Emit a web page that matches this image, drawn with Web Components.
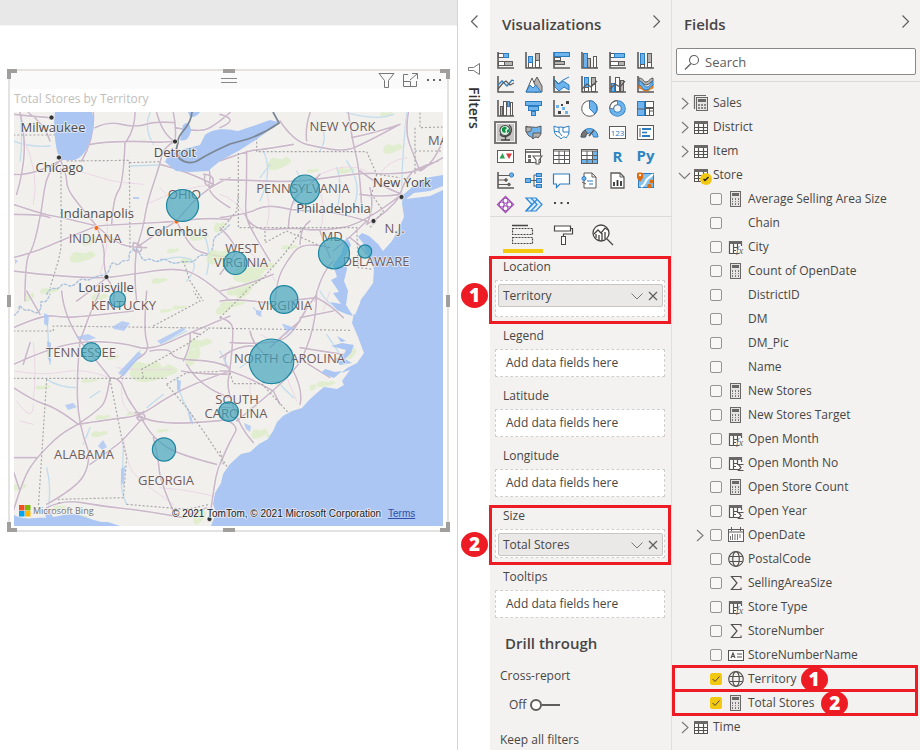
<!DOCTYPE html>
<html lang="en">
<head>
<meta charset="utf-8">
<meta name="viewport" content="width=device-width, initial-scale=1">
<title>Total Stores by Territory</title>
<style>
  html { height: 100%; }
  body {
    margin: 0; min-height: 100%; background: #fff; color: #484644;
    font: 12px/24px "Open Sans", "Noto Sans", sans-serif;
    --pane: #f3f2f1; --line: #e1dfdd; --ink: #605e5c; --red: #ed1c24; --yellow: #f2c811;
  }
</style>
</head>
<body>
<report-app></report-app>

<script>
class Base extends HTMLElement {
  connectedCallback() {
    if (this.shadowRoot) return;
    const t = document.createElement('template');
    t.innerHTML = '<style>*,*::before,*::after{box-sizing:border-box}button{font:inherit;color:inherit;background:none;border:0;padding:0;cursor:pointer}svg{display:block}' +
      this.css() + '</style>' + this.html();
    this.attachShadow({ mode: 'open' }).append(t.content.cloneNode(true));
  }
  css() { return ''; }
  html() { return ''; }
}

/* ---------- icons ---------- */
const K = '#5d5b59', B = '#6fb3ec', D = '#2b7cc0', G = '#b5b3b1', W = '#fff';
const r = (x, y, w, h, f = W, s = K) => `<rect x="${x + .5}" y="${y + .5}" width="${w - 1}" height="${h - 1}" fill="${f}" stroke="${s}"/>`;
const p = (d, f = 'none', s = K, w = 1) => `<path d="${d}" fill="${f}" stroke="${s}" stroke-width="${w}"/>`;
const c = (x, y, q, f = 'none', s = K, w = 1) => `<circle cx="${x}" cy="${y}" r="${q}" fill="${f}" stroke="${s}" stroke-width="${w}"/>`;
const axis = p('M1 0V16H17', 'none', K, 1.6);
const usa = 'M1 2C4 4 6 3 8 3C11 4 13 3 16 2V8C16 11 14 12 13 14C11 12 10 13 8 15C7 12 4 13 3 11C1 9 1 5 1 2Z';
const vizIcons = [
  ['Stacked bar chart', axis + r(1, 1, 6, 5) + r(6, 1, 6, 5, B, D) + r(1, 9, 7, 5) + r(7, 9, 9, 5, G)],
  ['Stacked column chart', axis + r(3, 10, 5, 6) + r(3, 4, 5, 7, B, D) + r(10, 8, 5, 8) + r(10, 1, 5, 8, G)],
  ['Clustered bar chart', axis + r(1, 0, 16, 5, B, D) + r(1, 5, 7, 4) + r(1, 9, 11, 4, G)],
  ['Clustered column chart', axis + r(2, 1, 5, 15, B, D) + r(6, 6, 4, 10, G) + r(12, 4, 4, 12)],
  ['100% stacked bar chart', axis + r(1, 1, 5, 5) + r(5, 1, 11, 5, B, D) + r(1, 9, 9, 5) + r(9, 9, 7, 5, G)],
  ['100% stacked column chart', axis + r(3, 1, 5, 12, B, D) + r(3, 12, 5, 4) + r(10, 1, 5, 10, G) + r(10, 10, 5, 6)],
  ['Line chart', axis + p('M1 9L5 5L10 10L15 4L17 5', 'none', D, 1.3) + p('M1 13L6 7L9 5L13 9L17 7', 'none', K, 1.2)],
  ['Area chart', p('M7 10L12 1L17 10V16H10Z', G) + p('M1 16L7 2L13 16Z', W) + p('M1 16L5 9L8 12L11 9L16 16Z', B, D)],
  ['Stacked area chart', p('M1 3L6 8L10 5L16 9V14L11 11L6 15L1 10Z', B, D) + axis + p('M1 3L5 8L10 4L16 1', 'none', D)],
  ['Line and stacked column chart', axis + r(3, 1, 5, 12, B, D) + r(3, 11, 5, 5) + r(10, 1, 5, 8, G) + r(10, 8, 5, 8) + p('M1 13L6 8L10 11L16 5', 'none', K, 1.3)],
  ['Line and clustered column chart', axis + r(2, 7, 4, 9, B, D) + r(6, 1, 5, 15) + r(11, 4, 4, 12, G) + p('M1 13L6 8L11 11L16 5', 'none', K, 1.3)],
  ['Ribbon chart', axis + p('M2 2C7 2 6 6 9 6C13 6 12 2 16 2V5C13 5 13 9 9 9C6 9 6 5 2 5Z', G) + p('M2 8C6 8 7 12 10 12C13 12 13 8 16 8V12C13 12 13 15 9 15C6 15 5 12 2 12Z', '#f2922c', '#dd6b10') + p('M2 5C6 5 6 11 10 11C13 11 13 7 16 5V9C13 10 13 14 9 14C5 14 5 9 2 9Z', B, D)],
  ['Waterfall chart', axis + r(3, 6, 3, 10, G) + r(6, 1, 4, 15) + r(10, 1, 3, 6, B, D) + r(13, 2, 3, 14)],
  ['Funnel chart', r(0, 1, 17, 5, B, D) + r(3, 6, 11, 5, B, D) + r(6, 11, 5, 5, B, D)],
  ['Scatter chart', axis + '<g stroke="none"><path d="M3 5h3v3H3zM9 7h3v3H9zM12 11h3v3h-3z" fill="#6fb3ec"/><path d="M13 1h3v3h-3zM8 4h2v2H8zM5 11h3v3H5z" fill="#454342"/></g>'],
  ['Pie chart', c(8.5, 8.5, 7.8, W) + p('M8.5 8.5V.7A7.8 7.8 0 0 1 13.8 14Z', B, D)],
  ['Donut chart', c(8.5, 8.5, 5.8, 'none', D, 5) + c(8.5, 8.5, 5.8, 'none', B, 3.4) + p('M8.5 2.5A6 6 0 0 0 2.5 8.5', 'none', K, 5) + p('M8 2.7A6 6 0 0 0 2.7 8', 'none', W, 3)],
  ['Treemap', r(0, 1, 8, 15, B, D) + r(8, 1, 9, 7) + r(8, 8, 5, 8) + r(12, 8, 5, 8) + p('M0 9H8M12 11H17', 'none', K)],
  ['Map', c(8, 6.5, 5, '#d7efe0', '#4d4d4d', 1.1) + '<path d="M5 4L8 2.5L10 4L8 6L9 8L7 9L5 7ZM10 6L12 5V8L10 9Z" fill="#119348"/>' + p('M12 1C16 4 15 11 9 12.5C6 13 4 12 3 10M8.5 13V15.5M4 16H13', 'none', '#444', 1.3)],
  ['Filled map', p(usa, B, K) + p('M6 3C7 7 6 8 1 8V3ZM8 9H16C16 11 14 12 13 14C11 12 10 13 8 15Z', G, K)],
  ['Shape map', p(usa, W, D) + p('M6 3V8L1 7M6 8L9 12M10 3V8H16', 'none', D)],
  ['Gauge', p('M0 13A8.5 8.5 0 0 1 17 13H12.5A4 4 0 0 0 4.5 13Z', B, D) + p('M8 12L13 6', 'none', K, 1.8) + p('M0 13A8.5 8.5 0 0 1 4 6L6.5 9.5A4 4 0 0 0 4.5 13Z', '#777')],
  ['Card', r(0, 2, 17, 13) + '<text x="8.5" y="12" text-anchor="middle" font-size="8" fill="#2b7cc0">123</text>'],
  ['Multi-row card', r(0, 1, 17, 15) + p('M3 4V13', 'none', K) + p('M5 5H14M5 12H13', 'none', D, 1.8) + p('M5 8.5H10', 'none', D, 1.6)],
  ['KPI', r(0, 2, 17, 13) + '<path d="M2.5 10.5L5.5 5L8 10.5Z" fill="#2f9e4f"/><path d="M9 5.5H15L12 11Z" fill="#d93b3b"/>'],
  ['Slicer', r(0, 1, 16, 14) + p('M0 4H16', 'none', K, 1.6) + '<path d="M3 7h3v3H3zM3 11h3v3H3z" fill="#6f6d6b"/>' + p('M8 8H17L14 12V16H11V12Z', W, K, 1.1)],
  ['Table', r(0, 1, 17, 15) + p('M0 3H17M0 7.5H17M0 11.5H17M6 3V16M11.5 3V16')],
  ['Matrix', r(0, 1, 17, 15) + '<path d="M11 3h5v12h-5zM1 11h10v4H1z" fill="#6fb3ec"/>' + p('M0 3H17M0 7.5H17M0 11.5H17M6 3V16M11.5 3V16')],
  ['R script visual', '<text x="8.5" y="14" text-anchor="middle" font-size="15" font-weight="700" fill="#2e86c1">R</text>'],
  ['Python visual', '<text x="8.5" y="13" text-anchor="middle" font-size="15" font-weight="700" fill="#2e86c1">Py</text>'],
  ['Key influencers', axis + p('M1 3.5H13M1 8H8M1 12.5H11') + c(14.5, 3, 2.1, B, D) + c(9, 8, 1.3, '#666') + c(12, 12.5, 1.3, '#666')],
  ['Decomposition tree', p('M5 8.5H11M9 3V14.5M9 3H12M9 14H12') + r(0, 6, 6, 5, B, D) + r(11, 1, 6, 4, B, D) + r(11, 6, 6, 5, B, D) + r(11, 12, 6, 4, B, D)],
  ['Q and A', p('M.5 2H16.5V12H7L3.5 15.5V12H.5Z', W, D, 1.2)],
  ['Smart narrative', p('M3 1H11L15 5V16H3Z', W) + p('M11 1V5H15') + p('M6 9H12M8 12H12', 'none', D) + c(3, 6.5, 2, B, D) + p('M1 10L5 12')],
  ['Paginated report', p('M2 1H11L15 5V16H2Z', W, K, 1.3) + p('M11 1V5H15') + p('M5 14V10M8.5 14V8M12 14V9', 'none', '#333', 1.8)],
  ['ArcGIS map', r(1, 1, 16, 15, '#86c2ee', D) + p('M16 2C14 5 10 6 9 9S7 13 4 15', 'none', W, 2.2) + '<path d="M0 1.5C0 0 6 0 6 1.5V6L3 10L0 6Z" fill="#e06c10"/><circle cx="3" cy="3.2" r="1.1" fill="#fff"/><circle cx="14.5" cy="9.5" r="2" fill="#e06c10"/><circle cx="12.5" cy="14" r="2.3" fill="#e06c10"/>'],
  ['Power Apps', p('M8.5 .5L12.5 4.500L16.500 8.500L12.500 12.500L8.500 16.500L4.500 12.500L.5 8.500L4.500 4.500Z', W, '#a14fb5', 1.3) + [[8.5, 4.7], [12.3, 8.5], [8.5, 12.3], [4.7, 8.5]].map(([x, y]) => c(x, y, 2.5, 'none', '#a14fb5', 1.1)).join('')],
  ['Power Automate', p('M1 2H11L17 8.5L11 15H1L7 8.5Z', '#d9ecfb', '#2b88d8', 1.2) + p('M6 2L12 8.5L6 15M1 15L12 3.500', 'none', '#2b88d8', 1.2)],
  ['More visuals', '<path d="M1 6h2v2H1zM7.5 6h2v2h-2zM14 6h2v2h-2z" fill="#484644"/>'],
];
const svg = (body, w = 17, h = w) => `<svg width="${w}" height="${h}" viewBox="0 0 ${w} ${h}" aria-hidden="true">${body}</svg>`;

const chev = {
  right: svg('<path d="M2.5 1.5L8.5 7.5L2.5 13.5" fill="none" stroke="#605e5c" stroke-width="1.2"/>', 11, 15),
  left: svg('<path d="M8.5 1.5L2.5 7.5L8.5 13.5" fill="none" stroke="#605e5c" stroke-width="1.2"/>', 11, 15),
  treeRight: svg('<path d="M6 3L12 8.5L6 14" fill="none" stroke="#7a7876" stroke-width="1.1"/>'),
  treeDown: svg('<path d="M3 6L8.5 11.5L14 6" fill="none" stroke="#7a7876" stroke-width="1.1"/>'),
};
const tableGrid = r(1, 2, 14, 13, '#fff', '#55524f') + '<path d="M1 2h14v3H1z" fill="#6a6866"/>' + p('M1 8.5H15M1 11.5H15M5.5 5V15M10.5 5V15', 'none', '#55524f', 1.2);
const partTable = p('M11 14.5H1.5V2.5H13.5V7', W, '#55524f', 1.2) + '<path d="M1 2h13v3H1z" fill="#6a6866"/>' + p('M5.5 5V14M9.5 5V10M5.5 8.5H9.5M5.5 11.5H8', 'none', '#55524f', 1.2);
const calc = r(2, 0, 11, 16, '#e6e4e2', '#6a6866') + '<path d="M4 2h7v3H4z" fill="#6a6866"/><path d="M4 7h1v2H4zM7 7h1v2H7zM10 7h1v2h-1zM4 10h1v1H4zM7 10h1v1H7zM10 10h1v1h-1zM4 12h1v2H4zM7 12h1v2H7zM10 12h1v2h-1z" fill="#7b7977"/>';
const fieldIcons = {
  '': '',
  table: tableGrid,
  calcs: p('M1.5 14V.5H13', 'none', '#6a6866', 1.2) + r(3, 2, 12, 14, '#e6e4e2', '#6a6866') + '<path d="M5 4h8v3H5z" fill="#6a6866"/><path d="M5 9h2v2H5zM8 9h2v2H8zM11 9h2v2h-2zM5 12h2v2H5zM8 12h2v2H8zM11 12h2v2h-2z" fill="#8b8987"/>',
  checked: tableGrid,
  calc,
  fx: partTable + '<text x="8" y="15" font-family="Liberation Serif" font-style="italic" font-size="10" fill="#666">fx</text>',
  sum: partTable + p('M15.5 9.5H10.5L13 12.5L10.5 15.5H15.5', 'none', '#55524f', 1.2),
  date: r(0, 2, 16, 13, W, '#605e5c') + p('M0 5H16M3.5 0V4M12.5 0V4') + '<path d="M4 7h1v6H4zM6.5 7h1v6h-1zM9 7h1v6H9zM11.5 7h1v4h-1zM2 9h1v4H2z" fill="#777"/>',
  globe: c(8, 8, 7.3, 'none', '#55524f', 1.2) + '<ellipse cx="8" cy="8" rx="3.3" ry="7.3" fill="none" stroke="#55524f" stroke-width="1.2"/>' + p('M1.5 5.5H14.5M1.5 10.5H14.5', 'none', '#55524f', 1.2),
  sigma: p('M13 3.5V1.5H3.5L9 8L3.5 14.5H13V12.5', 'none', '#55524f', 1.2),
  id: r(0, 3, 16, 11, W, '#55524f') + p('M3 11L5 6L7 11M3.5 9.5H6.5M9 7H14M9 10H14', 'none', '#55524f', 1.2),
};

/* ---------- shared parts ---------- */
customElements.define('callout-badge', class extends Base {
  css() { return ':host{display:grid;place-items:center;width:27px;height:25px;border-radius:50%;background:var(--red);color:#fff;font-size:19px;line-height:25px;font-weight:800}'; }
  html() { return '<slot></slot>'; }
});

/* ---------- map drawing ---------- */
function smooth(str) {
  const n = str.trim().split(/[ ,]+/).map(Number), q = [];
  for (let i = 0; i < n.length; i += 2) q.push([n[i], n[i + 1]]);
  let d = `M${q[0]}`;
  for (let i = 1; i < q.length - 1; i++) {
    const e = i === q.length - 2 ? q[i + 1] : [(q[i][0] + q[i + 1][0]) / 2, (q[i][1] + q[i + 1][1]) / 2];
    d += `Q${q[i]} ${e}`;
  }
  if (q.length === 2) d += `L${q[1]}`;
  return d;
}
const lines = (list) => list.split('|').map(smooth).join('');
/* Each sheet is drawn at three units to the pixel, from its own top left corner. */
const sheets = [
  { at: '0 60',
    road: '40 160 90 165 150 170|85 155 135 190 150 240|178 288 200 340 200 380 235 430 290 495|290 495 315 560 310 610 320 650|290 495 190 470 130 460 40 430|290 495 180 540 100 575 40 590|290 495 420 487 530 482 620 470 690 475|290 495 340 540 390 560 440 560|180 300 240 260 285 245 400 240 500 245 525 240|285 200 325 180 405 200 470 180 525 185|405 155 405 200 380 240|470 155 490 225 525 240|375 245 370 370 340 410 335 490|280 155 285 230 245 300|525 240 490 260 480 310 440 430 430 500 410 560|410 560 480 510 530 482 570 430 640 370 690 350|410 560 400 640 410 720|40 340 100 345 178 300|178 300 140 330 125 450 100 560 75 600 75 720|40 630 200 650 320 650|320 650 260 700 230 720|620 300 635 340 620 400 690 440|480 310 560 330 640 370|530 482 560 540 600 580 690 590|320 650 400 640 520 620 600 640 690 720|525 200 600 215 650 190 690 155|60 155 75 220 70 330 50 400|320 650 350 690 340 720|520 155 530 200 525 240|40 460 130 460 150 470|610 340 640 340 640 380 610 370 615 340|400 545 425 550 425 575 395 570 400 545',
    minor: '200 320 270 340 350 365 430 370|440 430 540 380 640 370|70 230 120 340 100 430|320 460 330 560 300 640|480 380 530 420 520 482',
    stream: '450 155 430 200 460 250|480 600 540 580 600 610 560 660|40 240 90 260 150 255|390 315 480 312|60 155 70 240 60 300|600 500 640 560 620 640',
    river: '140 700 150 680 175 685 190 665 215 680 245 650 262 660 290 645 325 640 335 600 355 615 365 598 390 600 385 575 410 560 420 580 430 600 450 592 470 605 490 590 520 610 550 600 580 605 600 580 625 585 640 560 640 530 665 515 690 490',
    dash: 'M40 222H218V155M215 222L205 298M200 300L388 298L390 560M388 305L480 302M183 310V560L175 600L150 680M550 600L570 660L610 720',
    green: '250 590 40 22|270 540 25 20|480 660 25 12|520 570 20 10|560 600 18 12|150 690 30 12|430 240 10 6|600 530 30 14' },
  { at: '220 60',
    road: '0 300 80 270 130 265 220 250|180 180 220 240 300 260 370 270 420 255 540 190|260 240 255 200 270 155|385 155 395 230 420 330 425 440|0 355 130 360 250 362 420 335 520 340 600 330 668 290|80 270 80 380 75 460 95 510 150 600|0 470 80 460 140 430 230 450 340 450 440 480|75 460 95 510 220 500 300 510 430 490 545 400|420 400 480 410 540 400|300 510 330 590|330 560 250 540 200 600 170 660 165 720|440 480 390 530 340 570|340 600 300 640 285 720|0 500 60 560 30 600 0 640|0 690 60 680 160 640|565 155 555 210 580 280 600 330|668 240 640 310 600 330|205 500 210 420 260 380 300 340|450 380 465 440 440 490|540 400 600 410 668 385|395 230 470 215 540 190|420 330 470 370 545 400|0 160 60 175 0 200|545 400 500 460 440 490|540 400 560 340 620 310 655 300|240 550 240 500 270 480|390 530 430 560 440 580',
    minor: '0 400 40 410 75 460|130 360 160 430 140 500|300 340 380 300 440 330|300 390 320 450 300 510|480 340 500 300 560 290|60 560 130 590 165 660',
    stream: '290 180 330 220 300 270|380 155 470 180 520 160|560 155 545 300 545 400|130 270 160 330 120 420|380 300 430 370 400 440|150 310 120 350|230 330 260 380 220 430|350 320 370 370 350 450',
    river: '',
    dash: 'M110 230V272H440L470 340L540 350M55 240V500H410L415 620L460 625M470 340L455 400L490 450L450 500M600 155V200L668 198M585 200V340M585 270L668 270M0 510L50 450L55 400M135 510V545L200 510L290 550L330 560M250 500L200 570L130 650L60 700',
    green: '180 310 36 26|520 265 30 20|380 330 28 12|280 330 20 8|130 620 40 18|90 640 50 34|60 690 40 20|0 590 40 30|0 500 18 20|500 160 20 8|100 660 30 26|210 560 26 9' },
  { at: '0 290',
    road: '40 220 130 180 240 150 370 155 450 180 570 125 690 75|240 150 230 250 235 400 265 480|240 150 290 210 330 260|330 260 320 330 290 360 235 400 180 430 110 500 70 560 40 660|330 260 360 260 380 320 420 375 460 440 530 490 650 520|235 400 330 385 420 375 500 320 600 270 690 240|420 375 440 390 560 400 690 385|40 500 110 500|40 290 100 330 170 350 235 400|460 440 475 500 480 570 520 660|690 450 655 520 640 600 630 680|265 480 270 520 230 590 140 640|420 390 375 440 355 460 270 520|140 650 190 625 300 645 440 660 550 680|360 260 400 210 450 180 430 120 440 0|185 0 190 70 240 150|40 110 130 70 190 80 265 75 400 60|300 0 265 75 240 150|450 180 510 170 520 205 650 210 690 230|570 125 575 160 550 210|600 130 580 125|560 220 600 290 690 320|40 540 60 600|90 155 70 220|80 0 120 70|690 180 660 200 690 240|545 240 590 250 690 250|570 670 620 650|405 365 435 365 435 390 405 385 420 375|410 380 430 362',
    minor: '100 155 110 230 100 330|40 240 130 255 250 230 330 260|50 330 100 400 100 340|370 250 350 350 400 370|370 440 380 520 420 570 520 640|100 400 60 390|480 590 600 600 650 620|350 230 410 240 520 235',
    stream: '140 70 150 220|140 265 180 290 230 290|270 320 300 300|270 410 250 460|140 530 155 590 145 650|370 440 370 520 360 600 380 640|420 180 360 250|480 160 560 120|530 260 540 330 580 380|440 350 490 310',
    river: '40 75 60 60 55 40 75 60 90 55 110 70 125 50 120 30 140 35 150 10',
    dash: 'M40 120H160V105L690 112M40 262H500M330 265L365 440L380 500L370 620L175 625L180 645M140 265L115 650M500 280L560 350L610 420L690 540M380 640L560 655L630 640M430 260L425 235L560 160L630 110M500 280L560 245L690 240M460 105L600 30L580 0',
    green: '470 250 70 34|440 240 50 36|580 200 24 40|300 20 26 14|310 380 24 10|300 430 26 12|60 590 22 14|60 690 30 12|220 680 50 8|180 650 20 8|600 160 40 20|540 50 24 8|270 270 26 8|130 290 24 8|490 420 20 7|500 60 20 8|90 20 14 18|400 370 20 10|600 680 20 30|340 200 20 10' },
  { at: '220 290',
    road: '0 80 35 90 40 130 30 240 20 290 60 410 100 455|30 155 140 160 210 140 260 50 290 10|0 200 60 160 100 165|290 0 290 80 250 200 220 240 160 300 50 390|30 240 90 260 160 300|290 20 330 40 370 80|240 90 180 140 150 170|220 240 250 300 240 340|0 380 60 400 30 450 0 520|240 170 300 180 370 190|250 210 330 260|160 300 180 340|0 30 60 20 160 40|0 240 30 240|240 80 340 60|90 120 100 170 150 200|200 30 290 20|0 350 30 350',
    minor: '120 130 220 180|180 210 230 330|90 260 90 310|310 60 330 0',
    stream: '100 50 125 75|190 100 230 120 200 130|350 60 310 20 300 0|170 270 220 320|320 130 360 190|100 200 60 230|0 180 20 220',
    river: '',
    dash: 'M0 112L395 118M30 245L40 278H125L205 365M0 80L60 20L80 0M0 480L10 520',
    green: '40 40 40 18|10 60 22 16|120 430 26 20|395 190 16 22|320 280 30 12|150 435 12 8|70 10 20 20|180 280 14 6|100 350 12 6|280 290 10 14' },
];
const city = (x, y, s) => `<text x="${x}" y="${y}" class="city">${s}</text>`;
const state = (x, y, s) => `<text x="${x}" y="${y}" class="state">${s}</text>`;
const state2 = (x, y, a, x2, b) => `<text class="state"><tspan x="${x}" y="${y}">${a}</tspan><tspan x="${x2}" dy="14">${b}</tspan></text>`;
const dot = (x, y, f = '#333') => `<circle cx="${x}" cy="${y}" r="2.6" fill="${f}" stroke="#fff" stroke-width=".8"/>`;
const bubbles = [[182.5, 204.5, 16], [305, 188.5, 14.5], [334, 252.3, 15.5], [365, 250.5, 6.7], [235.5, 262, 11.5], [117.7, 298.3, 7.8], [284, 298.5, 13.8], [91.3, 351, 9.3], [271.5, 360.3, 22.3], [228.6, 410.6, 9.8], [164, 448.5, 11.6]];
const mapArt = `
<svg viewBox="14 111 429 414" role="img" aria-label="Map of stores by territory">
  <rect x="14" y="111" width="429" height="414" fill="#f1f0ed"/>
  ${sheets.map(s => `<g transform="translate(${s.at}) scale(.33333)" fill="none" stroke-linejoin="round" stroke-linecap="round">
    <g fill="#deedc8" opacity=".8">${s.green.split('|').map(e => { const [x, y, a, b] = e.split(' ').map(Number); return `<path d="M${x - a} ${y}q${a * .2} ${-b} ${a * .7} ${-b * .7}t${a * .8} ${-b * .2}q${a * .7} ${b * .5} ${a * .2} ${b * .9}t${-a * .9} ${b * .6}q${-a * .9} ${b * .3} ${-a * .8} ${-b * .6}z"/>`; }).join('')}</g>
    <path d="${lines(s.stream)}" stroke="#c3dded" stroke-width="4"/>
    <path d="${lines(s.minor)}" stroke="#ecd6e6" stroke-width="3"/>
    <path d="${lines(s.road)}" stroke="#fff" stroke-width="8" opacity=".6"/>
    <path d="${lines(s.road)}" stroke="#cbb9ca" stroke-width="5"/>
    ${s.river ? `<path d="${lines(s.river)}" stroke="#a9bfda" stroke-width="4" stroke-dasharray="7 6"/>` : ''}
    <path d="${s.dash}" stroke="#a8a5a6" stroke-width="3.5" stroke-dasharray="6 6" stroke-linecap="butt"/>
  </g>`).join('')}
  <g fill="#abc6f3">
    <path d="M55 111C53 125 55 140 57 150C59 158 63 160 70 159C78 161 86 152 89 142C93 132 95 122 92 111Z"/>
    <path d="M183 124Q190 118 191 130Q188 142 180 139ZM188 111H200Q196 117 190 116Z"/>
    <path d="M165 161C170 150 172 147 176 153L184 148L200 144L205 134C215 126 228 128 238 130L253 125L270 119L278 121L268 130L257 138L240 149L220 160L208 170L190 171L176 170Z"/>
    <path d="M443 174L431 176L420 179L411 187L403 194L402 202L404 216L398 229L392 240L383 250L378 243L369 235L362 232L358 236L363 242L366 250L370 260L374 268L373 282L366 292L359 301L354 312L352 322L358 336L364 352L357 362L347 367L341 372L350 369L342 380L344 384L337 388L324 386L318 391L309 399L302 407L292 410L283 415L277 421L273 430L268 438L259 443L250 451L241 453L230 463L223 473L221 482L215 492L213 503L216 512L211 525H443Z"/>
    <path d="M347 236L351 244L345 257L347 268L344 280L348 290L346 304L353 315L346 313L337 309L330 301L341 303L333 292L339 291L331 279L337 276L333 264L341 253L344 243Z"/>
    <path d="M331 345L342 342L354 344L351 352L345 358L352 362L340 364L334 358L343 355L346 349Z"/>
    <path d="M325 368L335 371L342 370L334 377L321 372ZM337 335L346 340L341 341Z"/>
    <path d="M14 514C25 520 37 516 46 517C44 510 48 505 50 510L53 516C61 515 70 511 78 514C88 516 97 522 108 521L120 525H14Z"/>
    <g opacity=".8"><path d="M44 312l5 3-1 10-4-2zM47 340l4 2v20l-3-4zM112 326l10-6 8 2-6 8-10-2zM118 372l20-21 4 2-18 22zM157 340l27-14 1 3-24 14zM76 336l12-3 8 4-10 3zM65 404l8-2 4 4-9 3zM98 445l5-6 4 7-5 3zM187 408l5 9 1 7-3-4zM177 378l4 2-1 12-3-3zM121 468l4-3-1 20-3-4zM133 196h6v2h-6zM256 309l6 1-2 6-4-3zM244 422l7 3-1 6-4-3zM282 323l8 2 5 3-9 2zM15 258l3 2-3 3z"/></g>
  </g>
  <path d="M406 198L414 192L430 190L443 185V189L430 195L414 197Z" fill="#f1f0ed"/>
  <path d="M353 311L359 297L362 292L360 302L355 314Z" fill="#f1f0ed"/>
  <path d="M192 111Q191 121 184 129T178 142Q174 152 180 158Q188 164 197 160Q205 155 213 151T230 143L248 138Q265 132 279 122L273 111" fill="none" stroke="#7c8794" stroke-width="1.8"/>
  ${state(342.5, 130, 'NEW YORK')}<text x="428" y="144" class="state start">MA</text>
  ${state(303, 192, 'PENNSYLVANIA')}${state(184.5, 198, 'OHIO')}${state(95, 242, 'INDIANA')}${state(332, 240, 'MD')}
  ${state(394.5, 232, 'N.J.')}${state(376, 265, 'DELAWARE')}${state2(242, 252, 'WEST', 241, 'VIRGINIA')}
  ${state(123.5, 309, 'KENTUCKY')}${state(285, 309, 'VIRGINIA')}${state(81, 356, 'TENNESSEE')}${state(289.5, 362, 'NORTH CAROLINA')}
  ${state2(237, 403, 'SOUTH', 236, 'CAROLINA')}${state(84, 458, 'ALABAMA')}${state(166, 484, 'GEORGIA')}
  ${city(53, 131, 'Milwaukee')}${city(59.5, 171, 'Chicago')}${city(175, 156, 'Detroit')}${city(97, 217, 'Indianapolis')}
  ${city(177, 235, 'Columbus')}${city(106, 291, 'Louisville')}${city(402, 186, 'New York')}${city(333.5, 212, 'Philadelphia')}
  ${dot(51.5, 116.5)}${dot(59, 156.5)}${dot(175, 140.5)}${dot(106.5, 276)}${dot(401.5, 196)}${dot(373.5, 220)}${dot(209.5, 518)}
  ${dot(96.5, 227, '#f26b21')}${dot(176.5, 220.5, '#f26b21')}
  <g fill="#3ea4bd" fill-opacity=".68" stroke="#1e86a0" stroke-width="1.2">${bubbles.map(([x, y, q]) => `<circle cx="${x}" cy="${y}" r="${q}"/>`).join('')}</g>
  <path d="M19 504h5.500v5.500H19z" fill="#f25022"/><path d="M25 504h5.500v5.500H25z" fill="#7fba00"/><path d="M19 510h5.500v5.500H19z" fill="#00a4ef"/><path d="M25 510h5.500v5.500H25z" fill="#ffb900"/>
  <text x="33" y="513" class="bing">Microsoft Bing</text>
  <text x="172" y="516" class="copy">© 2021 TomTom, © 2021 Microsoft Corporation</text>
  <a href="#terms"><text x="388" y="516" class="copy terms">Terms</text></a>
</svg>`;

customElements.define('store-map', class extends Base {
  css() { return `:host{display:block}svg{width:100%;height:auto}
    text{font-family:"Open Sans","Noto Sans",sans-serif;text-anchor:middle;paint-order:stroke;stroke:#f4f3f1;stroke-opacity:.7;stroke-width:2px;stroke-linejoin:round}
    .city{font-size:13px;fill:#4f4c4d}.state{font-size:13px;fill:#6f5c5e}.start{text-anchor:start}
    .bing{font-size:9px;fill:#74726f;text-anchor:start}
    .copy{font-family:"Liberation Sans",Arial,sans-serif;font-size:10px;fill:#222;text-anchor:start}
    .terms{fill:#2f4fa8;text-decoration:underline;stroke:none}`; }
  html() { return mapArt; }
});

customElements.define('visual-card', class extends Base {
  css() { return `:host{display:block;position:relative;border:2px solid #e4e3e2;background:#fff;padding-bottom:4px}
    header{display:grid;grid-template-columns:1fr auto 1fr;align-items:center;height:18px;background:#fafafa;padding:0 4px}
    .grip{grid-column:2;width:16px;height:5px;border:solid #8a8886;border-width:1px 0}
    .tools{grid-column:3;display:flex;justify-content:flex-end;gap:7px;align-items:center}
    h2{margin:0;padding:0 4px 3px;font-size:12px;line-height:20px;font-weight:400;color:#c0bebc}
    store-map{margin:0 4px}
    i{position:absolute;background:#a19f9d}
    .n,.s{width:12px;height:4px;left:calc(50% - 6px)}.n{top:-2px}.s{bottom:-2px}
    .w,.e{width:4px;height:12px;top:calc(50% - 6px)}.w{left:-3px}.e{right:-3px}
    .nw,.ne,.sw,.se{width:10px;height:10px;background:none;border:0 solid #a19f9d}
    .nw{top:-2px;left:-3px;border-width:4px 0 0 4px}.ne{top:-2px;right:-3px;border-width:4px 4px 0 0}
    .sw{bottom:-2px;left:-3px;border-width:0 0 4px 4px}.se{bottom:-2px;right:-3px;border-width:0 4px 4px 0}`; }
  html() { return `<header><span class="grip"></span><span class="tools">
      <button aria-label="Filters on this visual">${svg(p('M1 1.5H16L10.5 8.5V15.5H6.5V8.5Z', 'none', '#777'))}</button>
      <button aria-label="Focus mode">${svg(p('M6 2.5H1.5V14.5H14.5V9M1.5 9.5H8.5V14.5M10 1.5H15.5V7M15 2L8 8', 'none', '#777'))}</button>
      <button aria-label="More options">${svg('<path d="M1 7h2v2H1zM7 7h2v2H7zM13 7h2v2h-2z" fill="#666"/>')}</button></span></header>
    <h2><slot name="title"></slot></h2><store-map></store-map>
    <i class="n"></i><i class="s"></i><i class="w"></i><i class="e"></i><i class="nw"></i><i class="ne"></i><i class="sw"></i><i class="se"></i>`; }
});

customElements.define('report-canvas', class extends Base {
  css() { return `:host{display:block;min-width:0;background:#fff}
    .top{height:26px;background:#e9e8e8;border-bottom:1px solid #f4f4f4}
    .page{padding:43px 8px 0}`; }
  html() { return '<div class="top"></div><div class="page"><slot></slot></div>'; }
});

/* ---------- filters pane ---------- */
customElements.define('filters-pane', class extends Base {
  css() { return `:host{display:flex;flex-direction:column;align-items:center;border-left:1px solid #d6d4d2;background:#fff;padding-top:14px}
    .f{margin:33px 0 11px}h2{margin:0;writing-mode:vertical-rl;font-size:14px;line-height:20px;font-weight:600;color:#323130}`; }
  html() { return `<button aria-label="Expand filters">${chev.left}</button>
    <span class="f">${svg(p('M12.5 1.5V12.5L6.5 8.5H1.5V5.5H6.5Z', 'none', '#7a7876'), 14)}</span><h2>Filters</h2>`; }
});

/* ---------- visualizations pane ---------- */
customElements.define('pane-header', class extends Base {
  css() { return `:host{display:flex;justify-content:space-between;align-items:flex-start;padding:14px 9px 0 12px;height:36px}
    h2{margin:0;font-size:15px;line-height:20px;font-weight:600;color:#484644}`; }
  html() { return `<h2><slot></slot></h2><button aria-label="Collapse pane">${chev.right}</button>`; }
});
customElements.define('viz-gallery', class extends Base {
  css() { return `:host{display:grid;grid-template-columns:repeat(6,28px);grid-auto-rows:24px;padding:12px 0 0 1px}
    button{display:grid;place-items:center}button[aria-pressed=true] svg{outline:2px solid #7a7876;outline-offset:1px;background:#c8c6c4}
    text{font-family:"Open Sans",sans-serif}svg{overflow:visible}`; }
  html() { return vizIcons.map(([n, b]) => `<button aria-label="${n}" aria-pressed="${n === 'Map'}">${svg(b)}</button>`).join(''); }
});
customElements.define('pane-tabs', class extends Base {
  css() { return `:host{display:block;border-top:1px solid #dddbd9;padding-left:13px}
    div{display:flex;height:36px}
    button{display:grid;place-items:center;padding-top:4px;width:40px;border-bottom:4px solid transparent}
    button[aria-selected=true]{border-color:var(--yellow)}`; }
  html() { return `<div role="tablist">
    <button role="tab" aria-selected="true" aria-label="Fields">${svg(p('M0 1.5H16', 'none', '#484644', 1.5) + '<path d="M.5 4.5H20.5V10.5H.5ZM.5 13.5H20.5V19.5H.5Z" fill="none" stroke="#484644" stroke-width="1.2" stroke-dasharray="2 1"/>', 22)}</button>
    <button role="tab" aria-selected="false" aria-label="Format">${svg(p('M2.5 2H18.5V7H2.5ZM18.5 4.5H20.5V10H11.500V13', W, '#484644', 1.2) + r(9, 12, 5, 9, W, '#484644'), 22)}</button>
    <button role="tab" aria-selected="false" aria-label="Analytics">${svg(c(9, 9, 8, W, '#484644', 1.3) + p('M15 15L21 21M2 10L6 6L9 9L13 4L16 6M4 14V10M7 16V11M10 17V9M13 15V8', 'none', '#484644', 1.3), 22)}</button></div>`; }
});
customElements.define('field-well', class extends Base {
  css() { return `:host{display:block;position:relative;padding:0 6px 0 5px;margin-bottom:7px}
    h3{margin:0 0 1px 8px;font-size:12px;line-height:24px;font-weight:400}
    .box{background:#fff;border:1px dashed #d2d0ce;min-height:28px;line-height:26px;padding-left:10px}
    .box.full{padding:3px 1px 1px 2px}
    :host([roomy]) .box{min-height:37px}
    .chip{display:flex;align-items:center;height:23px;background:#eae9e8;border:1px solid #c8c6c4;border-radius:2px;padding:0 1px 0 4px;line-height:21px}
    .chip span{flex:1}
    :host([badge])::after{content:"";position:absolute;inset:1px 0 -7px -1px;border:3px solid var(--red);pointer-events:none}
    callout-badge{position:absolute;left:-29px;top:28px;z-index:1}`; }
  html() {
    const f = this.getAttribute('field'), b = this.getAttribute('badge');
    return `<h3>${this.getAttribute('label')}</h3>` + (f
      ? `<div class="box full"><div class="chip"><span>${f}</span><button aria-label="Options for ${f}">${svg(p('M2.5 5.5L8 11L13.5 5.5', 'none', '#777'), 16)}</button><button aria-label="Remove ${f}">${svg(p('M4 4L12 12M12 4L4 12', 'none', '#605e5c', 1.2), 16)}</button></div></div>`
      : '<div class="box">Add data fields here</div>') + (b ? `<callout-badge>${b}</callout-badge>` : '');
  }
});
customElements.define('viz-pane', class extends Base {
  css() { return `:host{display:block;background:var(--pane)}
    .wells{padding-top:2px}
    h2{margin:0 0 0 15px;padding:7px 0;font-size:15px;line-height:22px;font-weight:600}
    p{margin:0 0 0 10px;line-height:30px}
    label{display:flex;align-items:center;gap:4px;padding-left:19px;height:28px}
    input{appearance:none;margin:0;width:30px;height:12px;background:linear-gradient(#605e5c,#605e5c) 12px 5px/18px 2px no-repeat}
    input::before{content:"";display:block;width:12px;height:12px;border:2px solid #605e5c;border-radius:50%;background:#fff}
    .keep{line-height:24px;padding:9px 0 0}`; }
  html() { return `<pane-header>Visualizations</pane-header><viz-gallery></viz-gallery><pane-tabs></pane-tabs>
    <div class="wells"><field-well label="Location" field="Territory" badge="1" roomy></field-well>
    <field-well label="Legend"></field-well><field-well label="Latitude"></field-well><field-well label="Longitude"></field-well>
    <field-well label="Size" field="Total Stores" badge="2"></field-well><field-well label="Tooltips"></field-well></div>
    <h2>Drill through</h2><p>Cross-report</p><label>Off<input type="checkbox" role="switch" aria-label="Cross-report"></label><p class="keep">Keep all filters</p>`; }
});

/* ---------- fields pane ---------- */
customElements.define('table-row', class extends Base {
  css() { return `:host{display:flex;align-items:center;height:24px;padding-left:4px}
    .ico{position:relative;width:16px;margin-right:4px}
    .ico b{position:absolute;left:7px;top:6px;width:12px;height:12px;border-radius:50%;background:var(--yellow);display:grid;place-items:center}`; }
  html() {
    const k = this.getAttribute('icon'), open = this.hasAttribute('open');
    return `<button aria-label="Toggle table" aria-expanded="${open}">${open ? chev.treeDown : chev.treeRight}</button>
      <span class="ico">${svg(fieldIcons[k], 16)}${k === 'checked' ? '<b>' + svg(p('M1.5 4L3 5.5L6.5 2', 'none', '#222', 1.5), 8) + '</b>' : ''}</span><span><slot></slot></span>`;
  }
});
customElements.define('field-row', class extends Base {
  css() { return `:host{display:flex;align-items:center;height:24px;padding-left:19px;position:relative}
    .exp{display:flex;width:17px;margin-right:2px}
    label{display:flex;align-items:center}
    input{appearance:none;margin:0 6px 0 0;width:12px;height:12px;border:1px solid #979593;border-radius:2px;background:#f8f7f6}
    input:checked{border-color:var(--yellow);background:var(--yellow) url("data:image/svg+xml,%3Csvg xmlns='http://www.w3.org/2000/svg' viewBox='0 0 10 10'%3E%3Cpath d='M1.500 5L4 7.500L8.500 2.500' fill='none' stroke='%23484644'/%3E%3C/svg%3E") center/10px no-repeat}
    .ico{width:16px;height:16px;margin-right:4px}
    :host([badge])::after{content:"";position:absolute;inset:-2px 2px -1px 0;border:3px solid var(--red);pointer-events:none}
    callout-badge{margin-left:4px}:host([badge="2"]) callout-badge{margin-left:7px}`; }
  html() {
    const b = this.getAttribute('badge');
    return `<span class="exp">${this.hasAttribute('expandable') ? `<button aria-label="Expand">${chev.treeRight}</button>` : ''}</span>
      <label><input type="checkbox" ${this.hasAttribute('checked') ? 'checked' : ''}><span class="ico">${svg(fieldIcons[this.getAttribute('icon') || ''], 16)}</span><slot></slot></label>${b ? `<callout-badge>${b}</callout-badge>` : ''}`;
  }
});
const storeFields = [['Average Selling Area Size', 'calc'], ['Chain', ''], ['City', 'fx'], ['Count of OpenDate', 'calc'], ['DistrictID', ''], ['DM', ''], ['DM_Pic', ''], ['Name', ''],
  ['New Stores', 'calc'], ['New Stores Target', 'calc'], ['Open Month', 'fx'], ['Open Month No', 'sum'], ['Open Store Count', 'calc'], ['Open Year', 'sum'], ['OpenDate', 'date', 'expandable'],
  ['PostalCode', 'globe'], ['SellingAreaSize', 'sigma'], ['Store Type', 'fx'], ['StoreNumber', 'sigma'], ['StoreNumberName', 'id'], ['Territory', 'globe', 'checked badge="1"'], ['Total Stores', 'calc', 'checked badge="2"']];
customElements.define('fields-pane', class extends Base {
  css() { return `:host{display:block;background:var(--pane);border-left:1px solid var(--line)}
    .search{display:flex;align-items:center;margin:12px 4px 6px;height:27px;background:#fff;border:1px solid #8a8886;border-radius:2px;padding-left:7px;gap:5px}
    input{flex:1;min-width:0;border:0;padding:0;background:none;outline:0;font:inherit;font-size:13px;color:#605e5c}input::placeholder{color:#605e5c;opacity:1}
    .tree{border-top:1px solid #dddbd9;padding-top:9px}`; }
  html() { return `<pane-header>Fields</pane-header>
    <label class="search">${svg(c(10, 6, 4.5, 'none', '#605e5c', 1.1) + p('M7 9.5L1 15.5', 'none', '#605e5c', 1.2), 16)}<input type="search" placeholder="Search" aria-label="Search fields"></label>
    <div class="tree"><table-row icon="calcs">Sales</table-row><table-row icon="table">District</table-row><table-row icon="table">Item</table-row><table-row icon="checked" open>Store</table-row>
    ${storeFields.map(([n, i, x = '']) => `<field-row icon="${i}" ${x}>${n}</field-row>`).join('')}
    <table-row icon="table">Time</table-row></div>`; }
});

customElements.define('report-app', class extends Base {
  css() { return `:host{display:grid;grid-template-columns:minmax(0,1fr) 33px 181px 249px;min-height:100vh}`; }
  html() { return `<report-canvas><visual-card><span slot="title">Total Stores by Territory</span></visual-card></report-canvas>
    <filters-pane></filters-pane><viz-pane></viz-pane><fields-pane></fields-pane>`; }
});
</script>
</body>
</html>
